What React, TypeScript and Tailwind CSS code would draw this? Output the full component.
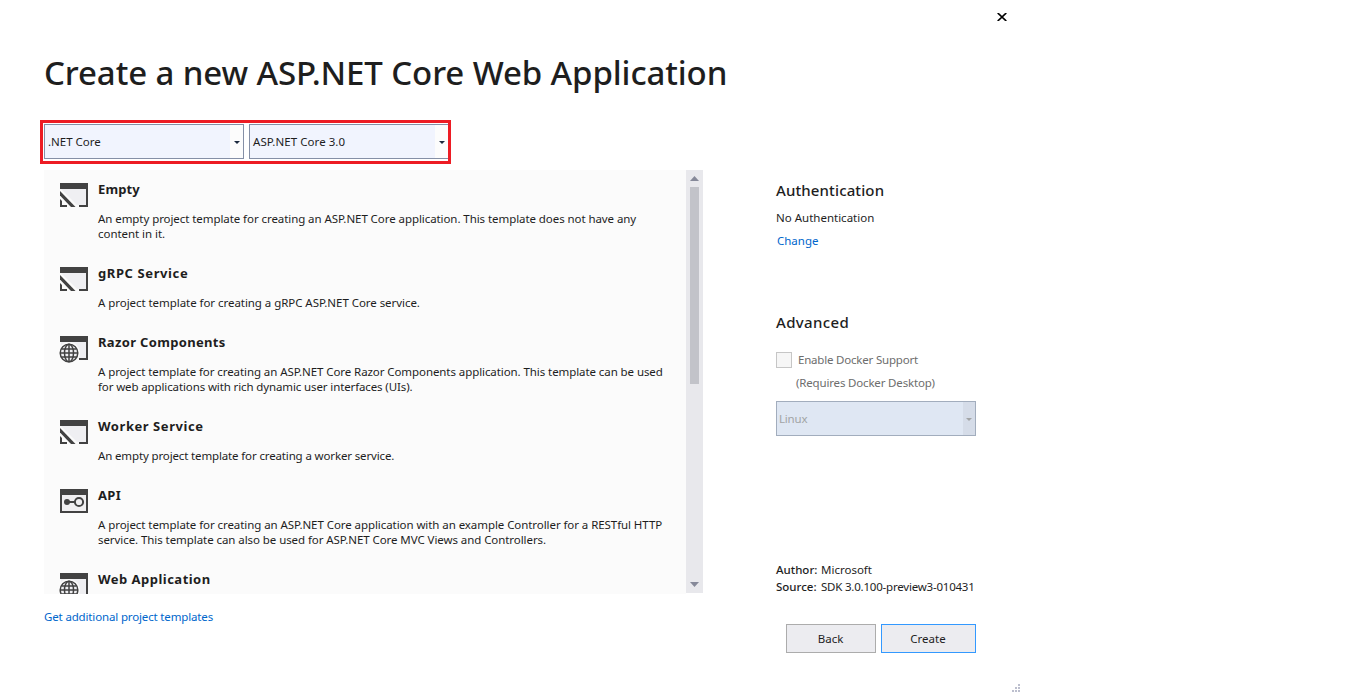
import React from "react";

type Line = { text: string; tracking: string };
type Template = {
  name: string;
  tracking: string;
  icon: "blank" | "web" | "api";
  lines: Line[];
};

const templates: Template[] = [
  {
    name: "Empty",
    tracking: "tracking-[0.1px]",
    icon: "blank",
    lines: [
      { text: "An empty project template for creating an ASP.NET Core application. This template does not have any", tracking: "tracking-[-0.07px]" },
      { text: "content in it.", tracking: "tracking-[-0.05px]" },
    ],
  },
  {
    name: "gRPC Service",
    tracking: "tracking-[0.6px]",
    icon: "blank",
    lines: [{ text: "A project template for creating a gRPC ASP.NET Core service.", tracking: "tracking-[-0.05px]" }],
  },
  {
    name: "Razor Components",
    tracking: "tracking-[0.33px]",
    icon: "web",
    lines: [
      { text: "A project template for creating an ASP.NET Core Razor Components application. This template can be used", tracking: "tracking-[-0.08px]" },
      { text: "for web applications with rich dynamic user interfaces (UIs).", tracking: "tracking-[-0.12px]" },
    ],
  },
  {
    name: "Worker Service",
    tracking: "tracking-[0.55px]",
    icon: "blank",
    lines: [{ text: "An empty project template for creating a worker service.", tracking: "tracking-[-0.14px]" }],
  },
  {
    name: "API",
    tracking: "tracking-[0.3px]",
    icon: "api",
    lines: [
      { text: "A project template for creating an ASP.NET Core application with an example Controller for a RESTful HTTP", tracking: "tracking-[-0.07px]" },
      { text: "service. This template can also be used for ASP.NET Core MVC Views and Controllers.", tracking: "tracking-[-0.07px]" },
    ],
  },
  {
    name: "Web Application",
    tracking: "tracking-[0.48px]",
    icon: "web",
    lines: [],
  },
];

function TemplateIcon({ kind }: { kind: Template["icon"] }) {
  if (kind === "blank") {
    return (
      <svg width="28" height="24" viewBox="0 0 28 24" className="block">
        <path d="M3 5H26V22H17L1 6Z" fill="#efeff2" />
        <path d="M0 0H28V24H19V22H26V6H4.5L0 6Z" fill="#424242" />
        <path d="M0 8L15.5 24H11L0 12.5Z" fill="#424242" />
        <path d="M0 16V24H7V22H2V18Z" fill="#424242" />
      </svg>
    );
  }
  if (kind === "api") {
    return (
      <svg width="28" height="24" viewBox="0 0 28 24" className="block">
        <path d="M1 1H27V23H1Z" fill="#f0eff1" stroke="#424242" strokeWidth="2" />
        <path d="M0 0H28V6H0Z" fill="#424242" />
        <circle cx="7" cy="13" r="3" fill="#424242" />
        <path d="M8 13H15" stroke="#424242" strokeWidth="2" />
        <circle cx="19" cy="13" r="4.1" fill="none" stroke="#424242" strokeWidth="2" />
      </svg>
    );
  }
  return (
    <svg width="28" height="28" viewBox="0 0 28 28" className="block overflow-visible">
      <path d="M1 5H26V23H1Z" fill="#efeff2" />
      <path d="M0 0H28V24H19V22H26V6H0Z" fill="#424242" />
      <circle cx="9" cy="17" r="11" fill="#fbfbfb" />
      <path d="M0 0H28V6H0Z" fill="#424242" />
      <g fill="#efeff2" stroke="#424242" strokeWidth="1.5">
        <circle cx="9" cy="17" r="8.8" />
        <ellipse cx="9" cy="17" rx="4.5" ry="8.8" fill="none" />
        <path d="M9 8.2V25.8M0.2 17H17.8M1.5 13H16.5M1.5 21H16.5" fill="none" />
      </g>
    </svg>
  );
}

function Caret({ color, up = false, wide = false }: { color: string; up?: boolean; wide?: boolean }) {
  return wide ? (
    <svg width="9" height="5" viewBox="0 0 9 5" className="block">
      <path d={up ? "M0 5L4.5 0L9 5Z" : "M0 0L4.5 5L9 0Z"} fill={color} />
    </svg>
  ) : (
    <svg width="6" height="3" viewBox="0 0 6 3" className="block">
      <path d="M0 0H6L3 3Z" fill={color} />
    </svg>
  );
}

function Combo({ label, tracking }: { label: string; tracking: string }) {
  return (
    <div className="flex h-[35px] w-[200px] shrink-0 border border-[#858fa6] bg-[#f1f4fe]">
      <div className={`flex-1 pl-[3px] leading-[34px] ${tracking}`}>{label}</div>
      <div className="flex w-[13px] items-center justify-center bg-[#fcfcfc] pt-px">
        <Caret color="#1b293e" />
      </div>
    </div>
  );
}

export default function App() {
  return (
    <div className="h-[692px] w-[1366px] overflow-hidden bg-white font-['Noto_Sans',sans-serif] text-[11.5px] leading-[15px] whitespace-nowrap text-[#1e1e1e]">
      <div className="flex h-full w-[1022px] flex-col">
        <div className="flex h-[34px] shrink-0 justify-end pt-[13px] pr-[15px]">
          <svg width="10" height="8" viewBox="0 0 10 8" className="block">
            <path d="M0.7 0L9.3 8M9.3 0L0.7 8" stroke="#000" strokeWidth="1.7" />
          </svg>
        </div>
        <h1 className="h-[86px] shrink-0 pt-[15px] pl-[44px] text-[33px] leading-[48px] font-medium tracking-[-0.11px]">
          Create a new ASP.NET Core Web Application
        </h1>

        <div className="flex min-h-0 flex-1">
          <main className="flex w-[703px] shrink-0 flex-col">
            <div className="ml-[40px] flex h-[44px] w-[411px] shrink-0 gap-[5px] overflow-hidden border-[3px] border-[#ed1c24] pt-px pl-px">
              <Combo label=".NET Core" tracking="tracking-[0px]" />
              <Combo label="ASP.NET Core 3.0" tracking="tracking-[0.06px]" />
            </div>

            <div className="mt-[6px] ml-[44px] flex h-[424px] shrink-0">
              <ul className="w-[642px] overflow-hidden bg-[#fbfbfb]">
                {templates.map((t) => (
                  <li key={t.name} className="flex pt-[10px] pb-[8px]">
                    <div className="w-[54px] shrink-0 pt-[3px] pl-[16px]">
                      <TemplateIcon kind={t.icon} />
                    </div>
                    <div>
                      <h2 className={`h-[31px] text-[13px] leading-[19px] font-bold ${t.tracking}`}>{t.name}</h2>
                      <div className="pb-[5px]">
                        {t.lines.map((l) => (
                          <p key={l.text} className={l.tracking}>
                            {l.text}
                          </p>
                        ))}
                      </div>
                    </div>
                  </li>
                ))}
              </ul>
              <div className="flex h-[423px] w-[17px] flex-col items-center bg-[#e8e8ec] pt-[6px] pb-[6px]">
                <Caret color="#868999" up wide />
                <div className="mt-[6px] h-[197px] w-[9px] bg-[#c2c3c9]" />
                <div className="mt-auto">
                  <Caret color="#868999" wide />
                </div>
              </div>
            </div>

            <a className="mt-[15px] ml-[44px] tracking-[-0.15px] text-[#0066cc]">Get additional project templates</a>
          </main>

          <aside className="ml-[73px] flex w-[200px] shrink-0 flex-col">
            <h3 className="mt-[60px] text-[15px] leading-[20px] font-medium tracking-[0.12px]">Authentication</h3>
            <p className="mt-[10px]">No Authentication</p>
            <a className="mt-[8px] ml-px text-[#0066cc]">Change</a>

            <h3 className="mt-[64px] text-[15px] leading-[20px] font-medium tracking-[0.35px]">Advanced</h3>
            <div className="mt-[20px] flex h-[16px] items-start text-[#6d6d6d]">
              <span className="h-[16px] w-[16px] border border-[#c6c6c6] bg-[#f6f6f6]" />
              <span className="ml-[6px] tracking-[-0.2px]">Enable Docker Support</span>
            </div>
            <p className="mt-[7px] ml-[20px] tracking-[-0.17px] text-[#6d6d6d]">(Requires Docker Desktop)</p>
            <div className="mt-[11px] flex h-[35px] border border-[#a2adbd] bg-[#dfe7f3] text-[#a2a4a5]">
              <div className="flex-1 pl-[2px] leading-[34px] tracking-[-0.2px]">Linux</div>
              <div className="flex w-[12px] items-center justify-center bg-[#d5dce8] pt-px">
                <Caret color="#a2a4a5" />
              </div>
            </div>

            <div className="mt-[125px] leading-[17px]">
              <div className="flex">
                <span className="w-[45px] font-medium">Author:</span>
                <span>Microsoft</span>
              </div>
              <div className="flex">
                <span className="w-[45px] font-medium">Source:</span>
                <span className="tracking-[-0.21px]">SDK 3.0.100-preview3-010431</span>
              </div>
            </div>
            <div className="mt-[29px] ml-[10px] flex gap-[5px]">
              <button className="h-[29px] w-[90px] border border-[#acacac] bg-[#ececf0] pr-px">Back</button>
              <button className="h-[29px] w-[95px] border border-[#3399ff] bg-[#ececf0] pr-px">Create</button>
            </div>
          </aside>

          <div className="mt-auto ml-auto pr-[2px]">
            <svg width="8" height="8" viewBox="0 0 8 8" className="block" fill="#bcbfce">
              <path d="M6 0h2v2h-2zM3 3h2v2h-2zM6 3h2v2h-2zM0 6h2v2h-2zM3 6h2v2h-2zM6 6h2v2h-2z" />
            </svg>
          </div>
        </div>
      </div>
    </div>
  );
}
